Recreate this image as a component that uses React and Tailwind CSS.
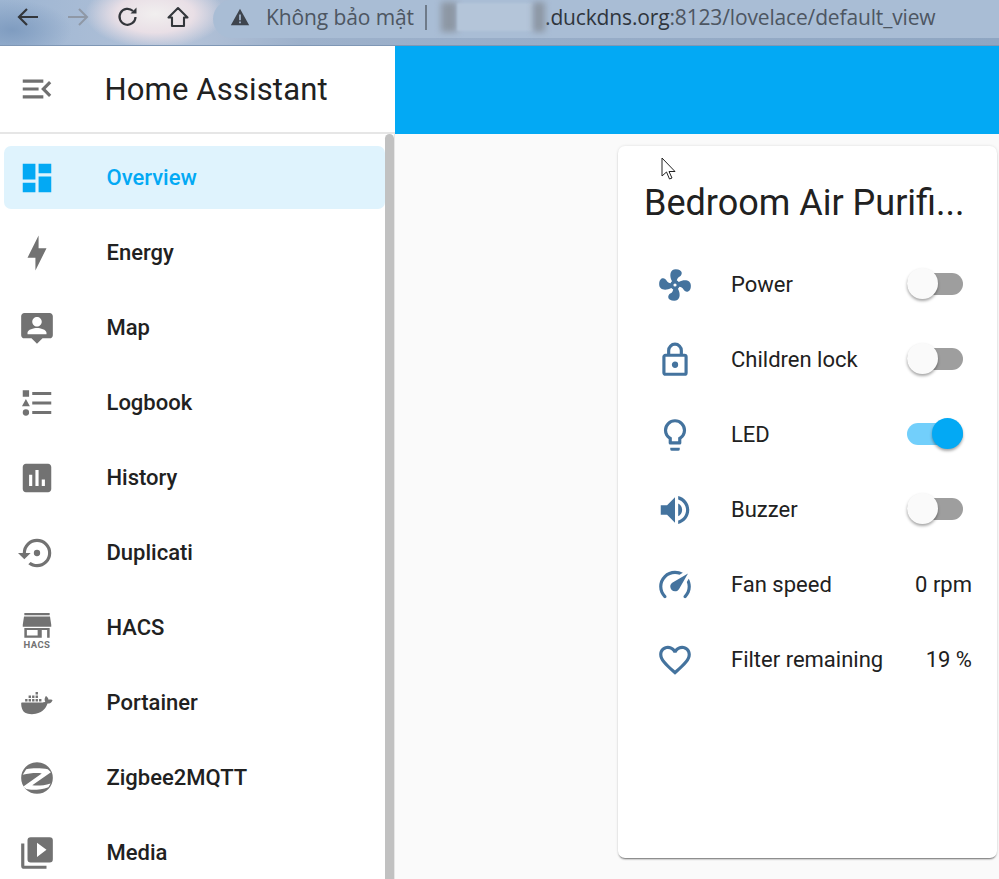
const P = {
  menu: "M21,15.61L19.59,17L14.58,12L19.59,7L21,8.39L17.44,12L21,15.61M3,6H16V8H3V6M3,13V11H13V13H3M3,18V16H16V18H3Z",
  dash: "M13,3V9H21V3M13,21H21V11H13M3,21H11V15H3M3,13H11V3H3V13Z",
  bolt: "M11 15H6L13 1V9H18L11 23V15Z",
  map: "M4 2.5H20C21.1 2.5 22 3.4 22 4.5V16.5C22 17.6 21.1 18.5 20 18.5H15.5L12 22L8.5 18.5H4C2.9 18.5 2 17.6 2 16.5V4.5C2 3.4 2.9 2.5 4 2.5M12 5C10.34 5 9 6.34 9 8C9 9.66 10.34 11 12 11C13.66 11 15 9.66 15 8C15 6.34 13.66 5 12 5M18 16V15C18 13 14 12 12 12C10 12 6 13 6 15V16H18Z",
  log: "M5,9.5L7.5,14H2.5L5,9.5M3,4H7V8H3V4M5,20A2,2 0 0,0 7,18A2,2 0 0,0 5,16A2,2 0 0,0 3,18A2,2 0 0,0 5,20M9,5V7H21V5H9M9,19H21V17H9V19M9,13H21V11H9V13Z",
  hist: "M19 3H5C3.9 3 3 3.9 3 5V19C3 20.1 3.9 21 5 21H19C20.1 21 21 20.1 21 19V5C21 3.9 20.1 3 19 3M9 17H7V10H9V17M13 17H11V7H13V17M17 17H15V13H17V17Z",
  dup: "M12,3A9,9 0 0,0 3,12H0L4,16L8,12H5A7,7 0 0,1 12,5A7,7 0 0,1 19,12A7,7 0 0,1 12,19C10.5,19 9.09,18.5 7.94,17.7L6.5,19.14C8.04,20.3 9.94,21 12,21A9,9 0 0,0 21,12A9,9 0 0,0 12,3M14,12A2,2 0 0,0 12,10A2,2 0 0,0 10,12A2,2 0 0,0 12,14A2,2 0 0,0 14,12Z",
  hacs: "M4 2.5H20V3.9H4ZM3.8 4.7H20.2L21 10V11.2H3V10ZM4 12H20V18.2H4ZM5.6 13.2V16.8H12.4V13.2ZM15 13.2V18.2H18.4V13.2Z",
  docker: "M21.81 10.25C21.75 10.2 21.25 9.82 20.17 9.82C19.89 9.82 19.61 9.85 19.33 9.9C19.12 8.5 17.95 7.79 17.9 7.76L17.61 7.59L17.43 7.86C17.19 8.22 17 8.63 16.92 9.05C16.72 9.85 16.84 10.61 17.25 11.26C16.76 11.54 15.97 11.61 15.81 11.61H2.64C2.3 11.61 2 11.89 2 12.24C2 13.39 2.17 14.54 2.56 15.62C3 16.78 3.66 17.64 4.5 18.16C5.46 18.75 7 19.08 8.79 19.08C9.57 19.08 10.38 19 11.19 18.86C12.31 18.66 13.39 18.27 14.37 17.71C15.18 17.24 15.91 16.65 16.53 15.96C17.57 14.78 18.19 13.46 18.65 12.29H18.84C19.97 12.29 20.67 11.84 21.05 11.45C21.31 11.21 21.5 10.92 21.65 10.58L21.81 10.25ZM4.5 9.4H6V11H4.5ZM6.7 9.4H8.2V11H6.7ZM8.9 9.4H10.4V11H8.9ZM11.1 9.4H12.6V11H11.1ZM13.3 9.4H14.8V11H13.3ZM6.7 7.2H8.2V8.8H6.7ZM8.9 7.2H10.4V8.8H8.9ZM11.1 7.2H12.6V8.8H11.1ZM11.1 5H12.6V6.6H11.1Z",
  zig: "M12 2A10 10 0 1 1 12 22A10 10 0 1 1 12 2ZM5.2 6.4C9 5.6 15 5.6 18.8 6.5L20.8 8.4L9 16.6C12.4 17 16.4 16.7 20.6 15.4L19.2 17.8C14.4 19.6 8.4 19.9 5.2 19L3.4 17.4L15 9.1C12 8.7 7.2 8.9 3 10Z",
  media: "M4,6H2V20A2,2 0 0,0 4,22H18V20H4V6M20,2H8A2,2 0 0,0 6,4V16A2,2 0 0,0 8,18H20A2,2 0 0,0 22,16V4A2,2 0 0,0 20,2M12,14.5V5.5L18,10L12,14.5Z",
  fan: "M12,11A1,1 0 0,0 11,12A1,1 0 0,0 12,13A1,1 0 0,0 13,12A1,1 0 0,0 12,11M12.5,2C17,2 17.11,5.57 14.75,6.75C13.76,7.24 13.32,8.29 13.13,9.22C13.61,9.42 14.03,9.73 14.35,10.13C18.05,8.13 22.03,8.92 22.03,12.5C22.03,17 18.46,17.1 17.28,14.73C16.78,13.74 15.72,13.3 14.79,13.11C14.59,13.59 14.28,14 13.88,14.34C15.87,18.03 15.08,22 11.5,22C7,22 6.91,18.42 9.27,17.24C10.25,16.75 10.69,15.71 10.89,14.79C10.4,14.59 9.97,14.27 9.65,13.87C5.96,15.85 2,15.07 2,11.5C2,7 5.56,6.89 6.74,9.26C7.24,10.25 8.29,10.68 9.22,10.87C9.41,10.39 9.73,9.97 10.14,9.65C8.15,5.96 8.94,2 12.5,2Z",
  lock: "M12,17C10.89,17 10,16.1 10,15C10,13.89 10.89,13 12,13A2,2 0 0,1 14,15A2,2 0 0,1 12,17M18,20V10H6V20H18M18,8A2,2 0 0,1 20,10V20A2,2 0 0,1 18,22H6C4.89,22 4,21.1 4,20V10C4,8.89 4.89,8 6,8H7V6A5,5 0 0,1 12,1A5,5 0 0,1 17,6V8H18M12,3A3,3 0 0,0 9,6V8H15V6A3,3 0 0,0 12,3Z",
  bulb: "M12,2A7,7 0 0,1 19,9C19,11.38 17.81,13.47 16,14.74V17A1,1 0 0,1 15,18H9A1,1 0 0,1 8,17V14.74C6.19,13.47 5,11.38 5,9A7,7 0 0,1 12,2M9,21V20H15V21A1,1 0 0,1 14,22H10A1,1 0 0,1 9,21M12,4A5,5 0 0,0 7,9C7,11.05 8.23,12.81 10,13.58V16H14V13.58C15.77,12.81 17,11.05 17,9A5,5 0 0,0 12,4Z",
  vol: "M14,3.23V5.29C16.89,6.15 19,8.83 19,12C19,15.17 16.89,17.84 14,18.7V20.77C18,19.86 21,16.28 21,12C21,7.72 18,4.14 14,3.23M16.5,12C16.5,10.23 15.5,8.71 14,7.97V16C15.5,15.29 16.5,13.76 16.5,12M3,9V15H7L12,20V4L7,9H3Z",
  gauge: "M12,16A3,3 0 0,1 9,13C9,11.88 9.61,10.9 10.5,10.39L20.21,4.77L14.68,14.35C14.18,15.33 13.17,16 12,16M12,3C13.81,3 15.5,3.5 16.97,4.32L14.87,5.53C14,5.19 13,5 12,5A8,8 0 0,0 4,13C4,15.21 4.89,17.21 6.34,18.65H6.35C6.74,19.04 6.74,19.67 6.35,20.06C5.96,20.45 5.32,20.45 4.93,20.07V20.07C3.12,18.26 2,15.76 2,13A10,10 0 0,1 12,3M22,13C22,15.76 20.88,18.26 19.07,20.07V20.07C18.68,20.45 18.05,20.45 17.66,20.06C17.27,19.67 17.27,19.04 17.66,18.65V18.65C19.11,17.2 20,15.21 20,13C20,12 19.81,11 19.46,10.1L20.67,8C21.5,9.5 22,11.18 22,13Z",
  heart: "M12.1,18.55L12,18.65L11.89,18.55C7.14,14.24 4,11.39 4,8.5C4,6.5 5.5,5 7.5,5C9.04,5 10.54,6 11.07,7.36H12.93C13.46,6 14.96,5 16.5,5C18.5,5 20,6.5 20,8.5C20,11.39 16.86,14.24 12.1,18.55M16.5,3C14.76,3 13.09,3.81 12,5.08C10.91,3.81 9.24,3 7.5,3C4.42,3 2,5.41 2,8.5C2,12.27 5.4,15.36 10.55,20.03L12,21.35L13.45,20.03C18.6,15.36 22,12.27 22,8.5C22,5.41 19.58,3 16.5,3Z",
};

function Icon({ d, className }) {
  return (
    <svg viewBox="0 0 24 24" fill="currentColor" fillRule="evenodd" className={className}>
      <path d={d} />
    </svg>
  );
}

const NAV = [
  ["Overview", P.dash],
  ["Energy", P.bolt],
  ["Map", P.map],
  ["Logbook", P.log],
  ["History", P.hist],
  ["Duplicati", P.dup],
  ["HACS", P.hacs],
  ["Portainer", P.docker],
  ["Zigbee2MQTT", P.zig],
  ["Media", P.media],
];

const ROWS = [
  ["Power", P.fan, false],
  ["Children lock", P.lock, false],
  ["LED", P.bulb, true],
  ["Buzzer", P.vol, false],
  ["Fan speed", P.gauge, "0 rpm"],
  ["Filter remaining", P.heart, "19 %"],
];

function Toggle({ on }) {
  return (
    <div className="relative w-[56px] h-[22px] mr-[9px] mb-[2px]">
      <div className={on ? "h-full rounded-full bg-[#72cffb]" : "h-full rounded-full bg-[#9e9e9e]"} />
      <div
        className={
          on
            ? "absolute right-0 top-[-5px] w-[31px] h-[31px] rounded-full bg-[#03a9f4] shadow-[0_2px_3px_rgba(0,0,0,0.35)]"
            : "absolute left-0 top-[-5px] w-[31px] h-[31px] rounded-full bg-[#fafafa] shadow-[0_2px_3px_rgba(0,0,0,0.35)]"
        }
      />
    </div>
  );
}

export default function App() {
  return (
    <div className="w-[999px] h-[879px] overflow-hidden flex flex-col relative bg-white font-['Roboto',sans-serif]">
      {/* browser chrome */}
      <div className="h-[46px] shrink-0 flex items-start border-b border-[#7f97b5] bg-[radial-gradient(ellipse_70px_34px_at_155px_14px,#f1efef_0%,#e9dfe6_55%,rgba(233,223,230,0)_100%),radial-gradient(ellipse_60px_30px_at_12px_30px,#7f9cc0_0%,rgba(127,156,192,0)_100%),linear-gradient(90deg,#9db5d2_0%,#b4c3d9_18%,#9db1cb_30%,#8fa6c2_100%)]">
        <div className="w-[213px] shrink-0 h-[33px] flex items-center text-[#2f3237]">
          <svg viewBox="0 0 24 24" className="w-[24px] h-[24px] ml-[16px]" fill="none" stroke="#33363b" strokeWidth="2.2">
            <path d="M22 12H3M11 4L3 12L11 20" />
          </svg>
          <svg viewBox="0 0 24 24" className="w-[24px] h-[24px] ml-[26px]" fill="none" stroke="#8f98a6" strokeWidth="2">
            <path d="M2 12H21M13 4L21 12L13 20" />
          </svg>
          <svg viewBox="0 0 24 24" className="w-[24px] h-[24px] ml-[26px]" fill="none" stroke="#33363b" strokeWidth="2.2">
            <path d="M19.5 12A8 8 0 1 1 17 6" />
            <path d="M20.5 2.5V8.5H14.5Z" fill="#33363b" stroke="none" />
          </svg>
          <svg viewBox="0 0 24 24" className="w-[24px] h-[24px] ml-[26px]" fill="none" stroke="#33363b" strokeWidth="2.1">
            <path d="M12 3L2.5 12.5H6V21H18V12.5H21.5Z" strokeLinejoin="round" />
          </svg>
        </div>
        <div className="flex-1 h-[38px] pb-[4px] rounded-l-[19px] bg-[#a9bdd5] flex items-center pl-[17px] font-['Open_Sans',sans-serif] text-[21px] text-[#4d5662]">
          <svg viewBox="0 0 24 24" className="w-[20px] h-[20px] shrink-0" fill="#3e444d">
            <path d="M1 22L12 2L23 22ZM11 9V16H13V9ZM11 17.5V19.5H13V17.5Z" fillRule="evenodd" />
          </svg>
          <span className="ml-[16px] whitespace-nowrap tracking-[-0.1px] leading-none">Không bảo mật</span>
          <div className="ml-[11px] w-[2px] h-[25px] bg-[#6e7a89]" />
          <div className="ml-[14px] w-[16px] h-[30px] bg-[#8d97a4] blur-[3px]" />
          <div className="w-[76px] h-[28px] bg-[#b4c5d9] blur-[1px]" />
          <div className="w-[12px] h-[30px] bg-[#8d97a4] blur-[3px]" />
          <span className="whitespace-nowrap tracking-[-0.15px] leading-none">
            <span className="text-[#2f353d]">.duckdns.org</span>:8123/lovelace/default_view
          </span>
        </div>
      </div>

      <div className="flex-1 flex min-h-0">
        {/* sidebar */}
        <aside className="w-[395px] shrink-0 flex flex-col bg-white">
          <div className="h-[88px] shrink-0 flex items-center border-b-2 border-[#e6e6e6] pl-[18px]">
            <Icon d={P.menu} className="w-[38px] h-[38px] text-[#707070]" />
            <span className="ml-[48.5px] text-[31px] leading-none text-[#212121] tracking-[0.15px]">Home Assistant</span>
          </div>
          <div className="flex-1 flex min-h-0">
            <nav className="w-[385px] shrink-0 pl-[4px] pt-[12px] flex flex-col gap-[12px]">
              {NAV.map(([label, d], i) => (
                <div
                  key={label}
                  className={
                    i === 0
                      ? "h-[63px] shrink-0 flex items-center rounded-[7px] bg-[#dff3fd] text-[#03a9f4]"
                      : "h-[63px] shrink-0 flex items-center text-[#212121]"
                  }
                >
                  <div className="relative w-[38px] h-[38px] ml-[14px] shrink-0">
                    <Icon d={d} className={i === 0 ? "w-[38px] h-[38px]" : "w-[38px] h-[38px] text-[#727272]"} />
                    {label === "HACS" && (
                      <span className="absolute left-0 right-0 top-[31px] text-center text-[9.5px] tracking-[0.4px] font-bold leading-none text-[#727272]">HACS</span>
                    )}
                  </div>
                  <span className="ml-[50.5px] text-[22px] leading-none font-medium">{label}</span>
                </div>
              ))}
            </nav>
            <div className="w-[9px] shrink-0 rounded-t-full bg-[#c1c1c1]" />
            <div className="w-px shrink-0 bg-[#e6e6e6]" />
          </div>
        </aside>

        {/* main */}
        <main className="flex-1 min-w-0 flex flex-col bg-[#fafafa]">
          <div className="h-[88px] shrink-0 bg-[#03a9f4]" />
          <div className="pl-[223px] pr-[2px] pt-[12px]">
            <section className="h-[712px] rounded-[7px] bg-white shadow-[0_2px_2px_-1px_rgba(0,0,0,0.55),0_0_3px_rgba(0,0,0,0.12)] pt-[35px] flex flex-col">
              <h1 className="pl-[26px] text-[36px] leading-[44px] text-[#212121] whitespace-nowrap">Bedroom Air Purifi...</h1>
              <div className="mt-[41px] flex flex-col gap-[37px]">
                {ROWS.map(([label, d, v]) => (
                  <div key={label} className="h-[38px] flex items-center pl-[38px] pr-[25px]">
                    <Icon d={d} className="w-[38px] h-[38px] text-[#44739e] shrink-0" />
                    <span className="ml-[37px] flex-1 text-[22px] leading-none text-[#212121]">{label}</span>
                    {typeof v === "string" ? (
                      <span className="text-[22px] leading-none text-[#212121]">{v}</span>
                    ) : (
                      <Toggle on={v} />
                    )}
                  </div>
                ))}
              </div>
            </section>
          </div>
        </main>
      </div>

      {/* mouse cursor over the card */}
      <svg viewBox="0 0 16 26" className="absolute left-[661px] top-[157px] w-[16px] h-[26px]" fill="white" stroke="#222" strokeWidth="1">
        <path d="M1 1V19L5.5 15L8.5 22L11 21L8 14.5H14Z" />
      </svg>
    </div>
  );
}
